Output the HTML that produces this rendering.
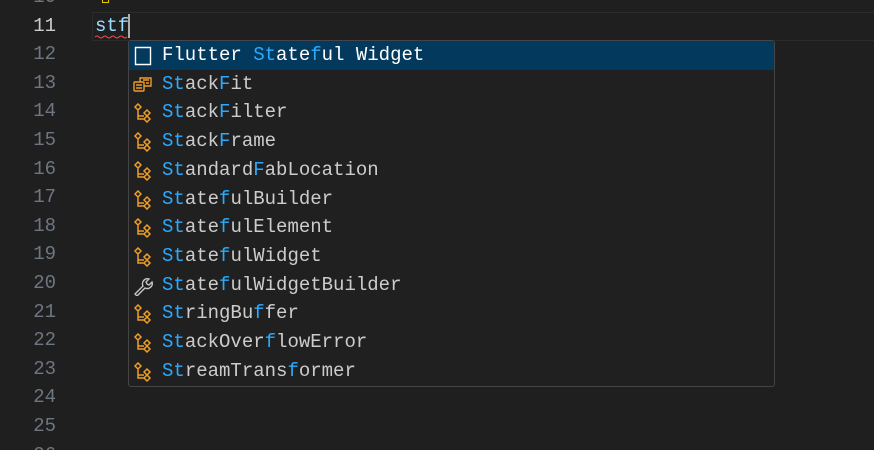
<!DOCTYPE html>
<html style="width:874px;height:450px;overflow:hidden"><head><style>
body{margin:0;width:874px;height:450px;background:#1f1f1f;overflow:hidden;position:relative;font-family:"Liberation Mono",monospace;font-size:19px;}
.ln{position:absolute;right:818px;width:60px;text-align:right;color:#6e7681;line-height:28.6px;height:28.6px;}
.cur{position:absolute;left:92px;top:12px;width:790px;height:27px;border:1px solid #2b2b2b;border-right:none;}
.sug{position:absolute;left:128px;top:40px;width:645px;height:345px;background:#202020;border:1px solid #454545;border-radius:3px;}
.row{position:absolute;left:0;width:645px;height:28.7px;line-height:28.7px;color:#cccccc;}
.row span.t{position:absolute;left:33px;}
.row.sel{background:#04395e;color:#fff;}
b{color:#2aaaff;font-weight:normal}
.ic{position:absolute;left:4px;top:5px;width:20px;height:20px;}
</style></head><body>
<div class="cur"></div>
<div class="ln" style="top:-17px">10</div>
<div class="ln" style="top:11.6px;color:#cccccc">11</div>
<div class="ln" style="top:40.2px">12</div>
<div class="ln" style="top:68.8px">13</div>
<div class="ln" style="top:97.4px">14</div>
<div class="ln" style="top:126px">15</div>
<div class="ln" style="top:154.6px">16</div>
<div class="ln" style="top:183.2px">17</div>
<div class="ln" style="top:211.8px">18</div>
<div class="ln" style="top:240.4px">19</div>
<div class="ln" style="top:269px">20</div>
<div class="ln" style="top:297.6px">21</div>
<div class="ln" style="top:326.2px">22</div>
<div class="ln" style="top:354.8px">23</div>
<div class="ln" style="top:383.4px">24</div>
<div class="ln" style="top:412px">25</div>
<div class="ln" style="top:440.6px;height:9px;overflow:hidden">26</div>
<div style="position:absolute;left:102px;top:-4px;width:5px;height:6px;border:1.5px solid #e8c900;border-top:none"></div>
<div style="position:absolute;left:95px;top:11.6px;line-height:28.6px;color:#9cdcfe">stf</div>
<div style="position:absolute;left:128px;top:14px;width:2px;height:24px;background:#aeafad"></div>
<svg style="position:absolute;left:95px;top:35px" width="34" height="5"><path d="M0 2 q2 -2 4 0 t4 0 t4 0 t4 0 t4 0 t4 0 t4 0 t4 0" stroke="#f14c4c" fill="none" stroke-width="1"/></svg>
<div class="sug">
<div class="row sel" style="top:0"><svg class="ic" viewBox="0 0 20 20"><path d="M2.5 1.5h15v17h-15z" fill="none" stroke="#fff" stroke-width="1.4"/></svg><span class="t">Flutter <b>St</b>ate<b>f</b>ul Widget</span></div>
<div class="row" style="top:28.7px"><svg class="ic" viewBox="0 0 20 20" fill="none" stroke="#ee9d28" stroke-width="1.4"><rect x="1" y="7" width="10" height="9" rx="1"/><path d="M7 7V3h11v8h-7M3 10h6M3 13h6M10 5h6M13 8h3"/></svg><span class="t"><b>St</b>ack<b>F</b>it</span></div>
<div id="rows"></div>
</div>
<script>
var cls='<svg class="ic" viewBox="0 0 20 20" fill="none" stroke="#ee9d28" stroke-width="1.5"><path d="M2 4l3-3 3 3-3 3z M5 7v6h6 M11 10l3-3 3 3-3 3z M11 16l3-3 3 3-3 3z M5 13v3h6"/></svg>';
var wr='<svg class="ic" viewBox="0 0 20 20" fill="none" stroke="#c5c5c5" stroke-width="1.4"><path d="M2 18l8-8a5 5 0 0 1 6-7l-3 3 1 2 2 1 3-3a5 5 0 0 1-7 6l-8 8z"/></svg>';
var items=[[cls,'<b>St</b>ack<b>F</b>ilter'],[cls,'<b>St</b>ack<b>F</b>rame'],[cls,'<b>St</b>andard<b>F</b>abLocation'],[cls,'<b>St</b>ate<b>f</b>ulBuilder'],[cls,'<b>St</b>ate<b>f</b>ulElement'],[cls,'<b>St</b>ate<b>f</b>ulWidget'],[wr,'<b>St</b>ate<b>f</b>ulWidgetBuilder'],[cls,'<b>St</b>ringBu<b>f</b>fer'],[cls,'<b>St</b>ackOver<b>f</b>lowError'],[cls,'<b>St</b>reamTrans<b>f</b>ormer']];
var h='';items.forEach(function(it,i){h+='<div class="row" style="top:'+((i+2)*28.7)+'px">'+it[0]+'<span class="t">'+it[1]+'</span></div>';});
document.getElementById('rows').outerHTML=h;
</script>
</body></html>
